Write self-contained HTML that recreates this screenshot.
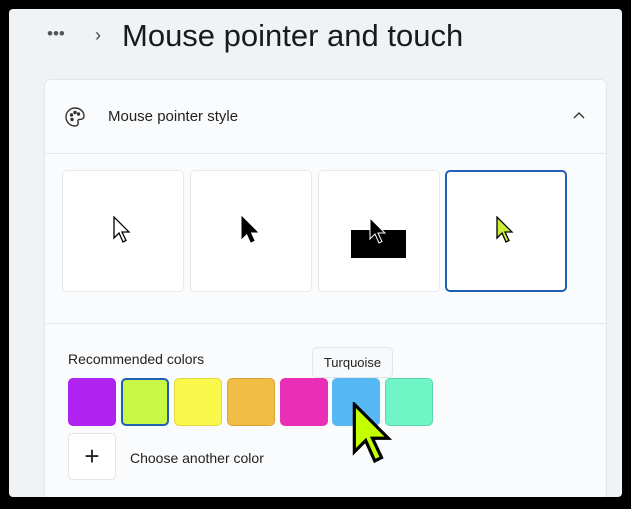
<!DOCTYPE html>
<html><head><style>
*{margin:0;padding:0;box-sizing:border-box}
body{width:631px;height:509px;background:#000;position:relative;overflow:hidden;font-family:"Liberation Sans",sans-serif}
.scr{position:absolute;left:9px;top:9px;width:613px;height:488px;background:#f0f3f6;border-radius:4px;overflow:hidden}
.a{position:absolute}
.card{left:35px;top:70px;width:563px;height:440px;background:#fafbfc;border:1px solid #e3e6ea;border-radius:6px}
.tile{top:170px;width:122px;height:122px;background:#fff;border:1px solid #e6e8ea;border-radius:5px}
.sw{top:378px;width:48px;height:48px;border-radius:5px}
</style></head><body>
<div class="scr"><div class="a card"></div></div>
<div class="a" style="left:47px;top:24px;font-size:17px;color:#555;letter-spacing:0px">•••</div>
<div class="a" style="left:95px;top:25px;font-size:18px;color:#444">›</div>
<div class="a" style="left:122px;top:18px;font-size:31px;color:#1a1a1a">Mouse pointer and touch</div>
<svg class="a" style="left:63px;top:105px" width="24" height="24" viewBox="0 0 24 24" fill="none" stroke="#333" stroke-width="1.4"><path d="M12 3c5 0 9 3.5 9 8 0 3-2.5 3.5-4.5 3.5-1.5 0-2 1-1.5 2.5.7 2-.5 4-3 4C7 21 3 17 3 12S7 3 12 3z"/><circle cx="8.5" cy="10" r="1" fill="#333"/><circle cx="12" cy="7.5" r="1" fill="#333"/><circle cx="15.5" cy="9" r="1" fill="#333"/><circle cx="9" cy="14.5" r="1" fill="#333"/></svg>
<div class="a" style="left:108px;top:108px;font-size:15px;color:#222">Mouse pointer style</div>
<svg class="a" style="left:572px;top:110px" width="14" height="10"><path d="M2 8l5-5 5 5" fill="none" stroke="#333" stroke-width="1.4"/></svg>
<div class="a" style="left:45px;top:153px;width:561px;height:1px;background:#e3e6ea"></div>
<div class="a tile" style="left:62px"></div>
<div class="a tile" style="left:190px"></div>
<div class="a tile" style="left:318px"></div>
<div class="a tile" style="left:445px;border:2px solid #1f5fb4"></div>
<svg class="a" style="left:113px;top:216px" width="22" height="30" viewBox="0 0 22 30"><path d="M1 1v21l5-5 4 9 3-1.5-4-8.5h7z" fill="#fff" stroke="#000" stroke-width="1.3"/></svg>
<svg class="a" style="left:241px;top:216px" width="22" height="30" viewBox="0 0 22 30"><path d="M1 1v21l5-5 4 9 3-1.5-4-8.5h7z" fill="#000" stroke="#000"/></svg>
<div class="a" style="left:351px;top:230px;width:55px;height:28px;background:#000"></div>
<svg class="a" style="left:369px;top:217px" width="22" height="30" viewBox="0 0 22 30"><path d="M1 1v21l5-5 4 9 3-1.5-4-8.5h7z" fill="#000" stroke="#fff" stroke-width="1"/></svg>
<svg class="a" style="left:496px;top:216px" width="22" height="30" viewBox="0 0 22 30"><path d="M1 1v21l5-5 4 9 3-1.5-4-8.5h7z" fill="#c9f035" stroke="#000" stroke-width="1.3"/></svg>
<div class="a" style="left:45px;top:323px;width:561px;height:1px;background:#e3e6ea"></div>
<div class="a" style="left:68px;top:351px;font-size:14px;color:#222">Recommended colors</div>
<div class="a sw" style="left:68px;background:#b022f0"></div>
<div class="a sw" style="left:121px;background:#c8f746;border:2px solid #1f5fb4"></div>
<div class="a sw" style="left:174px;background:#f9f84a;border:1px solid #e0d840"></div>
<div class="a sw" style="left:227px;background:#f2bd44;border:1px solid #d8a43a"></div>
<div class="a sw" style="left:280px;background:#e92fb6"></div>
<div class="a sw" style="left:332px;background:#56b8f3"></div>
<div class="a sw" style="left:385px;background:#70f6c6;border:1px solid #5ad6aa"></div>
<div class="a" style="left:312px;top:347px;width:81px;height:31px;background:#f8f9fa;border:1px solid #e2e4e6;border-radius:5px;font-size:13px;color:#222;text-align:center;line-height:29px">Turquoise</div>
<div class="a" style="left:68px;top:433px;width:48px;height:47px;background:#fff;border:1px solid #e2e4e6;border-radius:5px;font-size:26px;text-align:center;line-height:44px;color:#222;font-weight:300">+</div>
<div class="a" style="left:130px;top:450px;font-size:14px;color:#222">Choose another color</div>
<svg class="a" style="left:352px;top:402px" width="50" height="68" viewBox="0 0 22 30"><path d="M1 1v21l5-5 4 9 3-1.5-4-8.5h7z" fill="#c4ff00" stroke="#000" stroke-width="1.4"/></svg>
</body></html>
